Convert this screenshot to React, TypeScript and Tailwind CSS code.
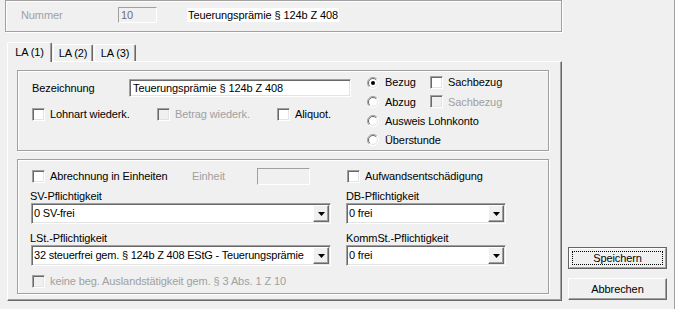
import React from "react";

const sunken =
  "border border-t-[#a0a0a0] border-l-[#a0a0a0] border-r-white border-b-white shadow-[inset_1px_1px_0_#696969,inset_-1px_-1px_0_#e3e3e3]";
const etched =
  "border border-[#a0a0a0] shadow-[1px_1px_0_#ffffff,inset_1px_1px_0_#ffffff]";
const raised =
  "border border-t-white border-l-white border-r-[#696969] border-b-[#696969] shadow-[inset_-1px_-1px_0_#a0a0a0]";

function Check({ label, disabled, className = "" }: { label: string; disabled?: boolean; className?: string }) {
  return (
    <div className={`flex items-center h-[13px] ${className}`}>
      <span className={`w-[13px] h-[13px] shrink-0 ${sunken} ${disabled ? "bg-[#f0f0f0]" : "bg-white"}`} />
      <span className={`ml-[5px] whitespace-nowrap ${disabled ? "text-[#a0a0a0]" : "text-black"}`}>{label}</span>
    </div>
  );
}

function Radio({ label, checked, className = "" }: { label: string; checked?: boolean; className?: string }) {
  return (
    <div className={`flex items-center ${className}`}>
      <svg width="12" height="12" viewBox="0 0 12 12" className="shrink-0">
        <circle cx="6" cy="6" r="5.5" fill="#ffffff" />
        <path d="M2.1 9.9 A5.5 5.5 0 0 1 9.9 2.1" fill="none" stroke="#a0a0a0" />
        <path d="M9.9 2.1 A5.5 5.5 0 0 1 2.1 9.9" fill="none" stroke="#ffffff" />
        <path d="M2.8 9.2 A4.5 4.5 0 0 1 9.2 2.8" fill="none" stroke="#696969" />
        <path d="M9.2 2.8 A4.5 4.5 0 0 1 2.8 9.2" fill="none" stroke="#e3e3e3" />
        {checked && <circle cx="6" cy="6" r="2" fill="#000000" />}
      </svg>
      <span className="ml-[6px] whitespace-nowrap">{label}</span>
    </div>
  );
}

function Combo({ value }: { value: string }) {
  return (
    <div className={`flex h-[21px] bg-white p-[1px] ${sunken}`}>
      <div className="flex-1 pl-[1px] leading-[17px] whitespace-nowrap overflow-hidden tracking-[-0.2px]">{value}</div>
      <div className={`w-[16px] h-[17px] bg-[#f0f0f0] flex items-center justify-center ${raised}`}>
        <svg width="7" height="4" viewBox="0 0 7 4">
          <path d="M0 0h7L3.5 4z" fill="#000000" />
        </svg>
      </div>
    </div>
  );
}

function Label({ text, className = "" }: { text: string; className?: string }) {
  return <div className={`h-[13px] leading-[13px] whitespace-nowrap ${className}`}>{text}</div>;
}

export default function App() {
  return (
    <div className="w-[675px] h-[309px] bg-[#f0f0f0] flex text-[11px] tracking-[-0.1px] text-black font-['Liberation_Sans',Arial,sans-serif] overflow-hidden">
      {/* left side: header box + tabs */}
      <div className="w-[562px] flex flex-col">
        <div className={`ml-[5px] w-[557px] h-[32px] flex items-center pb-[2px] ${etched}`}>
          <span className="ml-[15px] w-[97px] text-[#a0a0a0]">Nummer</span>
          <div className="w-[39px] h-[16px] bg-[#f0f0f0] border border-t-[#a0a0a0] border-l-[#a0a0a0] border-r-white border-b-white leading-[14px] pl-[2px] text-[#6d6d6d]">
            10
          </div>
          <span className="ml-[30px] bg-white h-[14px] leading-[14px] px-[1px]">Teuerungsprämie § 124b Z 408</span>
        </div>

        <div className="ml-[7px] mt-[10px] flex items-end">
          <div className="relative z-10 w-[45px] h-[20px] -mb-[1px] bg-[#f0f0f0] border-t border-l border-r border-t-white border-l-white border-r-[#696969] rounded-t-[2px] shadow-[inset_-1px_0_0_#a0a0a0] flex items-center justify-center pb-[1px]">
            LA (1)
          </div>
          <div className="ml-[1px] w-[40px] h-[17px] border-t border-l border-r border-t-white border-l-white border-r-[#696969] rounded-t-[2px] shadow-[inset_-1px_0_0_#a0a0a0] flex items-center justify-center">
            LA (2)
          </div>
          <div className="ml-[1px] w-[42px] h-[17px] border-t border-l border-r border-t-white border-l-white border-r-[#696969] rounded-t-[2px] shadow-[inset_-1px_0_0_#a0a0a0] flex items-center justify-center">
            LA (3)
          </div>
        </div>

        <div className="w-[555px] h-[240px] ml-[7px] border border-t-white border-l-white border-r-[#696969] border-b-[#696969] shadow-[inset_-1px_-1px_0_#a0a0a0] flex flex-col">
          {/* group 1 */}
          <div className={`ml-[9px] mt-[8px] w-[532px] h-[81px] flex ${etched}`}>
            <div className="w-[349px] pl-[14px] pt-[8px]">
              <div className="flex items-center h-[18px]">
                <span className="w-[97px]">Bezeichnung</span>
                <div className={`w-[222px] h-[18px] bg-white pl-[3px] leading-[16px] ${sunken}`}>Teuerungsprämie § 124b Z 408</div>
              </div>
              <div className="flex mt-[11px]">
                <Check label="Lohnart wiederk." className="w-[125px]" />
                <Check label="Betrag wiederk." disabled className="w-[120px]" />
                <Check label="Aliquot." />
              </div>
            </div>
            <div className="pt-[2px] flex flex-col">
              <div className="flex items-center h-[20px]">
                <Radio label="Bezug" checked className="w-[63px]" />
                <Check label="Sachbezug" />
              </div>
              <div className="flex items-center h-[20px]">
                <Radio label="Abzug" className="w-[63px]" />
                <Check label="Sachbezug" disabled />
              </div>
              <div className="flex items-center h-[20px]">
                <Radio label="Ausweis Lohnkonto" />
              </div>
              <div className="flex items-center h-[20px]">
                <Radio label="Überstunde" />
              </div>
            </div>
          </div>

          {/* group 2 */}
          <div className={`ml-[9px] mt-[8px] w-[532px] h-[135px] pl-[13px] pt-[8px] flex ${etched}`}>
            <div className="w-[300px] flex flex-col">
              <div className="flex items-center h-[17px]">
                <Check label="Abrechnung in Einheiten" className="ml-[1px] w-[160px]" />
                <span className="w-[65px] text-[#a0a0a0]">Einheit</span>
                <div className="w-[53px] h-[17px] bg-[#f0f0f0] border border-t-[#a0a0a0] border-l-[#a0a0a0] border-r-white border-b-white" />
              </div>
              <Label text="SV-Pflichtigkeit" className="mt-[5px] -ml-[1px]" />
              <Combo value="0 SV-frei" />
              <Label text="LSt.-Pflichtigkeit" className="mt-[8px] -ml-[1px]" />
              <Combo value="32 steuerfrei gem. § 124b Z 408 EStG - Teuerungsprämie" />
              <Check label="keine beg. Auslandstätigkeit gem. § 3 Abs. 1 Z 10" disabled className="ml-[1px] mt-[9px]" />
            </div>
            <div className="ml-[15px] w-[160px] flex flex-col">
              <div className="flex items-center h-[17px]">
                <Check label="Aufwandsentschädigung" className="ml-[1px]" />
              </div>
              <Label text="DB-Pflichtigkeit" className="mt-[5px]" />
              <Combo value="0 frei" />
              <Label text="KommSt.-Pflichtigkeit" className="mt-[8px]" />
              <Combo value="0 frei" />
            </div>
          </div>
        </div>
      </div>

      {/* right side: buttons */}
      <div className="flex-1 flex flex-col justify-end pl-[6px] pb-[9px] border-r border-[#a0a0a0]">
        <div className="w-[99px] h-[22px] border border-[#646464] bg-[#f0f0f0]">
          <div className="w-full h-full border border-t-white border-l-white border-r-[#a0a0a0] border-b-[#a0a0a0] p-[2px]">
            <div className="w-full h-full border border-dotted border-black flex items-center justify-center leading-none">
              Speichern
            </div>
          </div>
        </div>
        <div className={`mt-[9px] w-[99px] h-[22px] flex items-center justify-center ${raised}`}>Abbrechen</div>
      </div>
    </div>
  );
}
